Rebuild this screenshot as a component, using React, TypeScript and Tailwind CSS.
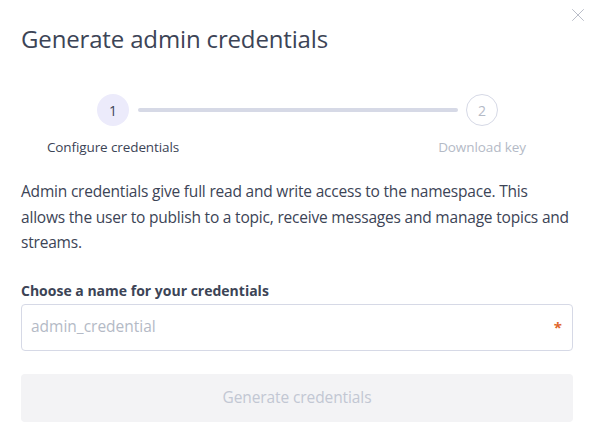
import { X } from 'lucide-react';

export default function App() {
  return (
    <div
      className="relative w-[592px] h-[440px] bg-white pl-[21px] pr-[19px] text-[#3c4456]"
      style={{ fontFamily: '"Open Sans", "Noto Sans", sans-serif' }}
    >
      <button className="absolute right-[3px] top-[4px] text-[#b3b8c4]" aria-label="Close">
        <X size={22} strokeWidth={1} />
      </button>

      <h1 className="pt-[22px] text-[24px] leading-[34px] tracking-[-0.15px] text-[#3c4456]">Generate admin credentials</h1>

      {/* stepper */}
      <div className="mt-[38px] flex items-center pl-[76px] pr-[75px]">
        <div className="flex h-[32px] w-[32px] shrink-0 items-center justify-center rounded-full bg-[#ecebfb] text-[14px] text-[#3c4456]">
          1
        </div>
        <div className="ml-[9px] mr-[8px] h-[4px] flex-1 rounded-full bg-[#d6d9e6]" />
        <div className="flex h-[32px] w-[32px] shrink-0 items-center justify-center rounded-full border border-[#d6d9e6] bg-white text-[14px] text-[#b4bac6]">
          2
        </div>
      </div>
      <div className="mt-[11px] flex justify-between pl-[22px] pr-[21px] text-[13.5px] leading-[20px] tracking-[-0.1px]">
        <span className="w-[140px] text-center text-[#3c4456]">Configure credentials</span>
        <span className="w-[140px] text-center text-[#b4bac6]">Download key</span>
      </div>

      <p className="mt-[22px] text-[15.5px] leading-[25.5px] tracking-[-0.2px] text-[#3c4456]">
        Admin credentials give full read and write access to the namespace. This
        <br />
        allows the user to publish to a topic, receive messages and manage topics and
        <br />
        streams.
      </p>

      <label className="mt-[25px] block text-[14px] font-bold leading-[20px] text-[#3c4456]">
        Choose a name for your credentials
      </label>
      <div className="mt-[3px] flex h-[47px] items-center rounded-[4px] border border-[#d6d9e6] pl-[9px] pr-[10px]">
        <input
          className="flex-1 bg-transparent text-[15.5px] text-[#3c4456] outline-none placeholder:text-[#b4bac6]"
          placeholder="admin_credential"
        />
        <span className="text-[15px] font-bold text-[#e0662c]">*</span>
      </div>

      <button
        disabled
        className="mt-[23px] flex h-[48px] w-full items-center justify-center rounded-[4px] bg-[#f3f3f5] text-[15.5px] tracking-[-0.1px] text-[#c2c7d3]"
      >
        Generate credentials
      </button>
    </div>
  );
}
